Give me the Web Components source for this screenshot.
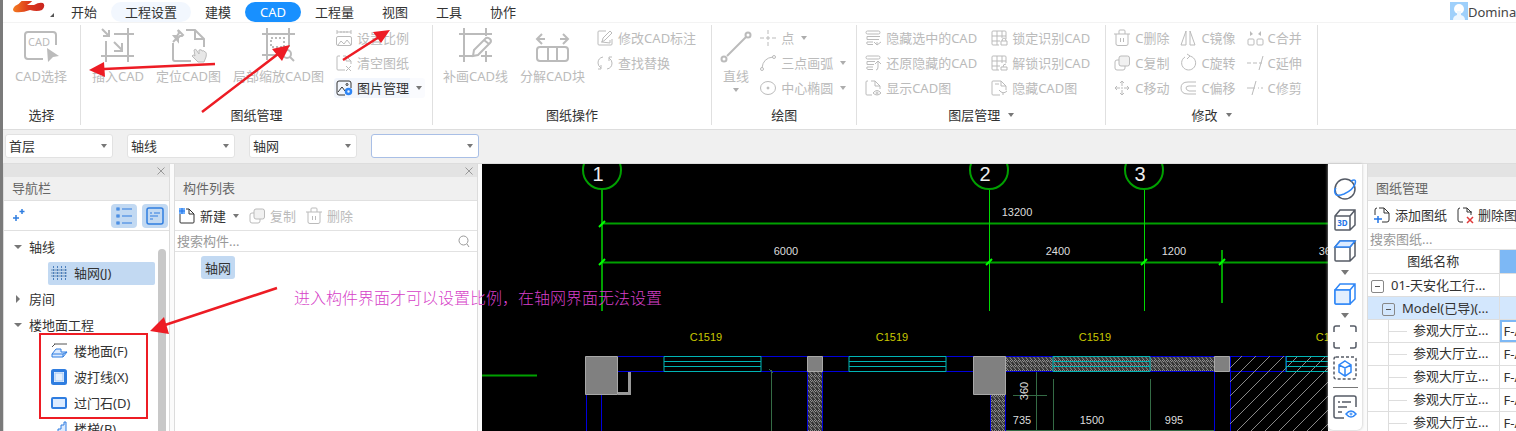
<!DOCTYPE html>
<html lang="zh-CN">
<head>
<meta charset="utf-8">
<title>CAD</title>
<style>
html,body{margin:0;height:100%}
body{font:13px/20px "Noto Sans","Noto Sans CJK SC",sans-serif;color:#333;background:#fff;overflow:hidden}
</style>
</head>
<body>
<cad-app></cad-app>
<script>
const RESET = `
*{box-sizing:border-box}
button,input,select{font:inherit;color:inherit;border:0;background:none;padding:0;margin:0;outline:0}
button{white-space:nowrap}
:host([hidden]){display:none}`;

const define = (name, html, setup) => customElements.define(name, class extends HTMLElement {
  connectedCallback() {
    if (this.shadowRoot) return;
    const t = document.createElement('template');
    t.innerHTML = typeof html === 'function' ? html(this) : html;
    this.attachShadow({mode: 'open'}).append(t.content.cloneNode(true));
    if (setup) setup(this);
  }
});

/* Icon drawings: [box size, markup]. Strokes use currentColor. */
const cube = `<path d="M2 8l5-6h15v15l-5 5H3q-1 0-1-1zM2 8h15v14M17 8l5-6"/>`;
const ICONS = {
  cadsel: [34, `<path d="M32 17V7q0-3-3-3H4Q1 4 1 7v21q0 3 3 3h15" stroke-width="2"/><text x="15" y="18" font-size="11" text-anchor="middle" fill="currentColor" stroke="none">CAD</text><path d="M23 20l12 8-6 1-5 5z" fill="currentColor" stroke="none"/>`],
  insert: [34, `<path d="M5 13v21M0 28h33M13 6h20M27 0v34M1 1l7 7M8 2v6H2M13 14l8 8M21 15v8h-8" stroke-width="2"/>`],
  locate: [34, `<path d="M1 15v16q0 2 2 2h16M14 2h9l9 9v8M23 2v9h9" stroke-width="2"/><path d="M6 2l5 5-1 1-2 0-2 2v3L2 8h3l2-3zM6 9l-5 5" stroke-width="2"/><path d="M22 22q2-2 3 1l2 3v-4q3-1 3 1 2-1 3 1 2 0 1 5l-2 5h-6l-6-6q1-2 3 0z" fill="currentColor" fill-opacity=".35"/>`],
  clipzoom: [34, `<path d="M5 0v32M27 0v19M0 6h33M0 27h19" stroke-width="2"/><path d="M9 10h13v9H9z" stroke-width="2" stroke-dasharray="2 2"/><circle cx="25" cy="26" r="4" stroke-width="2"/><path d="M28 29l4 4" stroke-width="2"/>`],
  patch: [34, `<path d="M5 0v34M0 6h33M27 0v8M0 28h13M22 28h11M27 23v11" stroke-width="2"/><path d="M14 28l1-6 12-12q2-1 4 1t0 4L19 27zM25 12l5 4" stroke-width="2"/>`],
  explode: [34, `<rect x="1" y="19" width="31" height="14" rx="3" stroke-width="2"/><path d="M12 19v14M21 19v14M1 11h8M6 6l-5 5 5 5M24 11h8M27 6l5 5-5 5" stroke-width="2"/>`],
  line: [34, `<path d="M8 28L27 9" stroke-width="2"/><circle cx="29" cy="7" r="2.5" stroke-width="2"/><circle cx="5" cy="31" r="2.5" stroke-width="2"/>`],
  scale: [16, `<path d="M1 0v4M15 0v4M1 2h14M5 1v2M8 1v2M11 1v2"/><rect x=".5" y="6.500" width="15" height="9" rx="1.500"/><path d="M2 15l3-4 3 3 3-4 4 5"/>`],
  clear: [16, `<path d="M9 15H2q-1 0-1-1V2q0-1 1-1h2M7 1h3l5 5v3M10 1v5h5M10 11l5 5M15 11l-5 5"/>`],
  picture: [16, `<path d="M15 8V3q0-2-2-2H3Q1 1 1 3v10q0 2 2 2h6M2 12l4-5 3 4"/><circle cx="11" cy="4.500" r="1"/><circle cx="12.500" cy="11.500" r="2.500" stroke="#2f86f6" stroke-width="2.500"/>`],
  edit: [16, `<path d="M9 1H2Q1 1 1 2v12q0 1 1 1h12q1 0 1-1V9M5 12l1-4 7-7 2 2-7 7zM4 12h1l8 1v-3"/>`],
  replace: [16, `<path d="M6 2Q1 3 1 8q0 3 3 5M4 10v4H1M10 14q5-1 5-6 0-3-3-5M12 6V2h3"/>`],
  point: [16, `<path d="M8 0v4M8 12v4M0 8h4M12 8h4M6 8h4M8 6v4"/>`],
  arc: [16, `<path d="M2 13Q3 3 13 2"/><circle cx="2" cy="14" r="1.500"/><circle cx="14" cy="2" r="1.500"/>`],
  ellipse: [16, `<ellipse cx="8" cy="8" rx="7.500" ry="6.500"/><circle cx="8" cy="8" r="1" fill="currentColor"/>`],
  layerhide: [16, `<rect x="1" y="1" width="14" height="3" rx="1.500"/><path d="M15 6.500H2v3h12M8 12H2q-1 2 1 2.500h5M9 12l3 3 4-3M12 12v3"/>`],
  layershow: [16, `<rect x="1" y="1" width="14" height="3" rx="1.500"/><path d="M10 6.500H2v3h7M8 12H2q-1 2 1 2.500h5M10 9l3-3 3 3M13 6v6q0 3-2 3"/>`],
  show: [16, `<path d="M7 15H2q-1 0-1-1V2q0-1 1-1h1M6 1h4l5 5v3M10 1v5h5M8 13q4-5 8 0-4 4-8 0z"/><circle cx="12" cy="13" r="1"/>`],
  hide: [16, `<path d="M9 15H2q-1 0-1-1V2q0-1 1-1h8l5 5v4M10 1v5h5M4 4h4M8 10q4 5 8 1M12 13v2"/>`],
  gridlock: [16, `<path d="M15 9V2q0-1-1-1H2Q1 1 1 2v12q0 1 1 1h6M1 6h14M1 11h8M6 1v14M11 1v7M10 11h6v4h-6zM11 11q0-3 2-3t2 3"/>`],
  gridopen: [16, `<path d="M15 8V2q0-1-1-1H2Q1 1 1 2v12q0 1 1 1h6M1 6h14M1 11h8M6 1v14M11 1v7M10 12h6v3h-6zM12 12q0-3 3-3"/>`],
  trash: [16, `<path d="M0 4h16M5 4V1q0-1 1-1h4q1 0 1 1v3M2 4v10q0 1.500 2 1.500h8q2 0 2-1.500V4M6.500 8v4M9.500 8v4"/>`],
  copy: [16, `<rect x="5" y="1" width="10.500" height="10" rx="2" fill="currentColor" fill-opacity=".2"/><path d="M5 5H3Q1 5 1 7v6q0 2 2 2h6q2 0 2-2v-2"/>`],
  move: [16, `<path d="M8 1v5M8 10v5M1 8h5M10 8h5M6 3l2-2 2 2M6 13l2 2 2-2M3 6L1 8l2 2M13 6l2 2-2 2M7 8h2"/>`],
  mirror: [16, `<path d="M6 1v14H1zM10 1v14h5z"/>`],
  rotate: [16, `<path d="M5 2A7 7 0 1 0 9 1M7-1l3 2-3 3"/>`],
  offset: [16, `<path d="M16 2H8Q1 2 1 8t7 6h8M16 6H9Q6 6 6 8t3 3h7"/>`],
  merge: [16, `<rect x="1" y="9" width="6" height="6" rx="1"/><rect x="10" y="9" width="6" height="6" rx="1"/><path d="M3 1v5l3-2zM14 1v5l-3-2z" fill="currentColor" stroke="none"/>`],
  extend: [16, `<path d="M0 8h4M6 8h4M16 1l-4 14M12 8h3"/>`],
  trim: [16, `<path d="M0 8h8M11 8h1M14 8h2M9 1L5 15"/>`],
  sparkle: [16, `<path d="M12 1v5M9.500 3.500h5M6 7v6M3 10h6" stroke-width="1.500"/>`],
  list: [20, `<path d="M3 2h2v2H3zM3 9h2v2H3zM3 16h2v2H3zM8 3h10M8 10h10M8 17h10" stroke-width="1.200"/>`],
  note: [20, `<rect x="2" y="2" width="16" height="16" rx="2" stroke-width="1.500"/><path d="M5 7h2M9 7h6M5 10h8M5 13h3" stroke-width="1.200"/>`],
  axis: [16, `<path d="M0 5h16M0 8h16M0 11h16" stroke="#6f90b5"/><path d="M2.500 1v14M6.500 1v14M10.500 1v14M14.500 1v14" stroke="#4b7fbd" stroke-dasharray="2 1"/>`],
  floor: [16, `<path d="M3 1h13M4 1L1 4" stroke="#555"/><path d="M5 6h5v3h6l-4 5H1v-3zM1 11h11v3M12 11l4-2" fill="#dcebff"/>`],
  wave: [16, `<rect x="1.500" y="1.500" width="13" height="13" rx="1" stroke-width="3" stroke="#2f7de0"/><rect x="4" y="4" width="8" height="8" fill="#e5f0fd" stroke="#9cc4f5"/>`],
  stone: [16, `<rect x="1" y="3" width="14" height="10" rx="1" fill="#dcebff" stroke-width="2"/>`],
  stair: [16, `<path d="M1 14h3v-3h3V8h3V4h3V1h2v14H1z" fill="#dcebff"/>`],
  fresh: [16, `<path d="M1 6v8q0 1 1 1h12q1 0 1-1V6l-5-5H7M10 1v5h5"/><path d="M0 0h6v6H0z" fill="#6fb0ff" stroke="none"/><path d="M0 3h6M3 0v6" stroke="#2575e6"/>`],
  search: [16, `<circle cx="7.500" cy="7.500" r="4.500"/><path d="M11 11l2 3"/>`],
  addpage: [16, `<path d="M1 8V3q0-2 2-2M5 1h5l5 5v7q0 2-2 2H8M10 1v5h5"/><path d="M4 9v7M0 12h8" stroke="#2575e6" stroke-width="1.500"/>`],
  delpage: [16, `<path d="M6 15H3q-2 0-2-2V3q0-2 2-2M6 1h4l4 4v3M10 1v4h5"/><path d="M10 10l6 6M16 10l-6 6" stroke="#e03a3a" stroke-width="1.500"/>`],
  orbit: [24, `<circle cx="12" cy="12" r="10" stroke-width="1.500"/><path d="M18 4Q24 1 22 7 20 13 11 17 3 20 2 16 1 13 3 11" stroke="#2f86f6" stroke-width="1.500"/>`],
  threed: [24, `<g stroke-width="1.500">${cube}</g><text x="9.500" y="18" font-size="8" font-weight="700" text-anchor="middle" stroke="none" fill="#2575e6">3D</text>`],
  cubetop: [24, `<g stroke-width="1.500">${cube}<path d="M2 8l5-6h15l-5 6z" fill="#dcebff" stroke="#2f86f6"/></g>`],
  cubeblue: [24, `<g stroke="#2f86f6" stroke-width="1.500">${cube}<path d="M2 8h15v14H3q-1 0-1-1z" fill="#e3effe"/></g>`],
  full: [24, `<path d="M1 7V3q0-2 2-2h4M17 1h4q2 0 2 2v4M23 17v4q0 2-2 2h-4M7 23H3q-2 0-2-2v-4" stroke-width="1.500"/>`],
  select3d: [24, `<rect x="1" y="1" width="22" height="22" rx="2" stroke-dasharray="3 2" stroke-width="1.500"/><path d="M12 5l6 4v7l-6 4-6-4V9zM6 9l6 3 6-3M12 12v8" stroke="#2f86f6" stroke-width="1.500"/>`],
  inspect: [24, `<path d="M23 12V3q0-2-2-2H3Q1 1 1 3v18q0 2 2 2h8M5 7h2M9 7h9M5 12h9M5 17h4" stroke-width="1.500"/><path d="M13 19q5-6 10 0-5 6-10 0z" stroke="#2f86f6" stroke-width="1.500"/><circle cx="18" cy="19" r="1" stroke="#2f86f6"/>`],
  close: [10, `<path d="M1.500 1.500l7 7M8.500 1.500l-7 7"/>`],
  user: [18, `<path d="M0 0h18v18H0z" fill="#9fd0fb" stroke="none"/><circle cx="9" cy="7" r="5" fill="#fff" stroke="none"/><path d="M3 18q0-4 4-5V9h4v4q4 1 4 5z" fill="#eef7ff" stroke="none"/>`],
  logo: [34, `<path d="M12 0Q10 7 3 10-1 14 3 16 10 17 18 14 25 16 30 14 34 10 31 7 27 6 22 9 18 9 15 9 21 6 23 0z" stroke="none" fill="url(#lg)"/><defs><linearGradient id="lg"><stop offset="0" stop-color="#f47b20"/><stop offset=".5" stop-color="#dc3a1d"/><stop offset="1" stop-color="#c92520"/></linearGradient></defs>`]
};

define('ui-icon', el => {
  const [s, body] = ICONS[el.getAttribute('name')];
  return `<style>:host{display:block;flex:none;width:${s}px;height:${s}px}svg{display:block;overflow:visible}</style>
  <svg width="${s}" height="${s}" viewBox="0 0 ${s} ${s}" fill="none" stroke="currentColor" aria-hidden="true">${body}</svg>`;
});

define('ui-caret', `<style>:host{display:block;flex:none;border:3px solid transparent;border-top:4px solid #777;border-bottom:0}</style>`);

define('tool-button', el => {
  const a = n => el.getAttribute(n), has = n => el.hasAttribute(n);
  return `<style>${RESET}
  :host{display:block;flex:none}
  button{display:flex;align-items:center;gap:5px;height:25px;color:#333}
  button:disabled{color:#bbb}
  :host([large]) button{flex-direction:column;gap:4px;height:auto;padding-top:3px}
  :host([large]) ui-caret{margin-top:-2px}
  :host(:not([large])) ui-caret{margin-left:2px}
  button:disabled ui-caret{opacity:.6}
  :host([lit]) button{background:linear-gradient(90deg,#f2f6fd 84%,#fafbfe 84%);height:20px;margin:3px 0 0 -2px;padding:0 3px 0 2px;border-radius:3px}
  </style><button ${has('off') ? 'disabled' : ''}><ui-icon name="${a('icon')}"></ui-icon><span>${a('label')}</span>${has('menu') ? '<ui-caret></ui-caret>' : ''}</button>`;
});

define('ribbon-group', el => `<style>${RESET}
  :host{display:flex;flex-direction:column;flex:none;height:100px;border-right:1px solid #e0e0e0}
  .body{display:flex;gap:var(--gap,12px);height:80px;padding:0 var(--end,15px) 0 var(--start,8px)}
  footer{display:flex;justify-content:center;align-items:center;gap:8px;height:20px;color:#333}
  ::slotted(.col){display:flex;flex-direction:column}
  </style><div class="body"><slot></slot></div><footer><span>${el.getAttribute('label')}</span>${el.hasAttribute('menu') ? '<ui-caret></ui-caret>' : ''}</footer>`);

define('combo-box', el => `<style>${RESET}
  :host{display:block;position:relative;width:108px;height:24px}
  select{appearance:none;width:100%;height:100%;padding:0 20px 0 3px;border:1px solid #e2e2e2;border-radius:3px;background:#fff;color:#333}
  :host([active]) select{border-color:#a9bfe6}
  ui-caret{position:absolute;right:6px;top:10px;pointer-events:none}
  </style><select aria-label="${el.getAttribute('label')}"><option>${el.getAttribute('value') || ''}</option></select><ui-caret></ui-caret>`);

define('dock-panel', el => `<style>${RESET}
  :host{display:flex;flex-direction:column;min-width:0;min-height:0;background:#fff;border:solid #dcdcdc;border-width:0 1px;overflow:hidden}
  .strip{display:flex;justify-content:flex-end;align-items:center;flex:none;height:13px;padding-right:3px;background:#e3e3e3;color:#999}
  h2{flex:none;margin:0;height:24px;padding:1px 8px 0;font-size:13px;font-weight:400;line-height:20px;background:#f0f0f0;color:#666;border-bottom:1px solid #e0e0e0}
  </style><div class="strip"><button aria-label="关闭"><ui-icon name="close"></ui-icon></button></div><h2>${el.getAttribute('label')}</h2><slot></slot>`);

define('search-row', el => `<style>${RESET}
  :host{display:flex;align-items:center;flex:none;height:22px;padding:0 5px 0 2px;border:solid #e2e2e2;border-width:1px 0;color:#999}
  input{flex:1;min-width:0;height:20px;color:#333}
  input::placeholder{color:#999;opacity:1}
  </style><input type="search" placeholder="${el.getAttribute('label')}" aria-label="${el.getAttribute('label')}"><ui-icon name="search"></ui-icon>`);

define('nav-tree', `<style>${RESET}
  :host{display:flex;flex:1;min-height:0;overflow:hidden;padding-top:3px}
  ul{list-style:none;margin:0;padding:0;flex:1}
  li{height:26px;display:flex;align-items:center}
  button{display:flex;align-items:center;gap:7px;height:24px}
  .p button{padding-left:10px}
  .arrow{width:8px;height:8px;background:#777;clip-path:polygon(0 2px,8px 2px,4px 6px)}
  .arrow.shut{clip-path:polygon(2px 0,6px 4px,2px 8px)}
  .c button{margin-left:44px;padding-left:3px;width:107px;height:23px;color:#333;border-radius:2px}
  .c ui-icon{color:#2f7de0}
  .on button{background:#c2d9f2}
  .bar{width:8px;margin:15px 3px 0 0;background:#c8c8c8;border-radius:4px 4px 0 0}
  </style>
  <ul>
  <li class="p"><button><i class="arrow"></i>轴线</button></li>
  <li class="c on"><button><ui-icon name="axis"></ui-icon>轴网(J)</button></li>
  <li class="p"><button><i class="arrow shut"></i>房间</button></li>
  <li class="p"><button><i class="arrow"></i>楼地面工程</button></li>
  <li class="c"><button><ui-icon name="floor"></ui-icon>楼地面(F)</button></li>
  <li class="c"><button><ui-icon name="wave"></ui-icon>波打线(X)</button></li>
  <li class="c"><button><ui-icon name="stone"></ui-icon>过门石(D)</button></li>
  <li class="c"><button><ui-icon name="stair"></ui-icon>楼梯(B)</button></li>
  </ul><div class="bar"></div>`);

define('cad-view', () => {
  const tick = (x, y) => `<path d="M${x - 3} ${y + 3}l6-6" stroke="#00ff00" stroke-width="2"/>`;
  const win = (x, w) => `<path d="M${x} 356.500h${w}v15h-${w}zM${x} 361.500h${w}M${x} 366.500h${w}" stroke="#00b4b4"/>`;
  const diag = Array.from({length: 12}, (_, k) => `M${1242 + 14 * k} 356l-90 90`).join('');
  return `<style>:host{display:block;flex:1;min-width:0;background:#000;overflow:hidden}svg{display:block;width:100%;height:100%}
  text{font:11px "Liberation Sans",sans-serif;fill:#ddd;stroke:none;text-anchor:middle}
  .n{font-size:20px;fill:#eee}.y{fill:#c8c800}</style>
  <svg fill="none" role="img" aria-label="CAD">
  <defs><pattern id="h" width="4" height="5" patternUnits="userSpaceOnUse"><rect width="4" height="5" fill="#353535"/><path d="M0 0l4 5M2 0l2 2" stroke="#aaa" stroke-width=".8"/></pattern>
  <clipPath id="c"><path d="M1230 356h400v400h-400z"/></clipPath></defs>
  <g transform="translate(-482 -164)">
  <g stroke="#00a000" stroke-width="2"><circle cx="602" cy="170" r="19"/><circle cx="989" cy="170" r="19"/><circle cx="1144" cy="170" r="19"/>
  <path d="M602 190v121M1222 250v53M602 223.500h1200M602 262.500h1200M482 375.500h55"/></g>
  <path d="M989.500 190v121M1144.500 190v121" stroke="#00d800"/>
  ${tick(602, 224)}${tick(602, 262)}${tick(989, 262)}${tick(1144, 262)}${tick(1222, 262)}
  <path d="M808 372h14v80h-14zM991 395h14v80h-14zM1006 357h208v14h-208z" fill="url(#h)"/>
  <path d="M618 356.500h668M618 371.500h668M586.500 395v80M601.500 395v80M807.500 372v80M822.500 372v80M990.500 395v80M1005.500 395v80M1214.500 372v80M1230.500 356v100M1286.500 356v16" stroke="#0000dc"/>
  <path clip-path="url(#c)" d="${diag}" stroke="#888"/>
  ${win(664, 97)}${win(849, 97)}${win(1053, 97)}${win(1286, 97)}
  <path d="M585.500 356.500h32v38h-32zM973.500 356.500h32v38h-32zM807.500 356.500h15v15h-15zM1214.500 356.500h15v15h-15z" fill="#808080" stroke="#a8a8a8"/>
  <path d="M618 393.500h11.500V372" stroke="#999" stroke-width="3"/>
  <path d="M771.500 370v80M769 369l4 4M1036.500 372v80M1013 395.500h34M1053.500 379v80M1150.500 379v80M1006 430.500h208" stroke="#346b45"/>
  <text class="n" x="598" y="181">1</text><text class="n" x="985" y="181">2</text><text class="n" x="1140" y="181">3</text>
  <text x="1017" y="216">13200</text><text x="786" y="255">6000</text><text x="1058" y="255">2400</text><text x="1174" y="255">1200</text><text x="1331" y="255">3600</text>
  <text class="y" x="706" y="341">C1519</text><text class="y" x="892" y="341">C1519</text><text class="y" x="1095" y="341">C1519</text><text class="y" x="1332" y="341">C1519</text>
  <text x="1022" y="424">735</text><text x="1092" y="424">1500</text><text x="1174" y="424">995</text><text transform="translate(1028 391) rotate(-90)">360</text>
  </g></svg>`;
});

define('view-tools', () => {
  const b = (i, l) => `<button aria-label="${l}"><ui-icon name="${i}"></ui-icon></button>`;
  return `<style>${RESET}
  :host{display:flex;flex-direction:column;align-items:center;gap:7px;flex:none;width:34px;margin-bottom:1px;padding-top:13px;background:#fff;color:#555b66;border-radius:0 0 5px 5px;box-shadow:0 0 3px #bbb}
  button{display:block;height:24px}
  ui-caret{border-width:5px 4px 0}
  hr{width:25px;height:1px;margin:0;border:0;background:#777}
  </style>${b('orbit', '旋转')}${b('threed', '三维')}${b('cubetop', '俯视')}<ui-caret></ui-caret>${b('cubeblue', '实体')}<ui-caret></ui-caret>${b('full', '全屏')}${b('select3d', '选择')}<hr>${b('inspect', '显示')}`;
});

define('sheet-table', () => {
  const row = `<tr><td class="k"><i></i>参观大厅立...</td><td>F-A</td></tr>`;
  return `<style>${RESET}
  :host{display:block;overflow:hidden}
  table{border-collapse:collapse;table-layout:fixed;width:230px;color:#333}
  th,td{height:23px;padding:0;font-weight:400;line-height:20px;text-align:left;white-space:nowrap;border:solid #dedede;border-width:0 1px 1px 0;overflow:hidden}
  col:first-child{width:131px}
  th{text-align:center}
  th+th{background:#7db8f5}
  td+td{padding-left:4px}
  .sel td{background:#d3e7fd}
  td button{display:inline-block;width:13px;height:13px;margin:0 7px 0 3px;border:1px solid #888;border-radius:2px;background:linear-gradient(#555,#555) 3px 5px/5px 1px no-repeat;vertical-align:-2px}
  .sel button{margin-left:14px}
  .k i{display:inline-block;width:19px;height:23px;margin:-2px 6px -2px 20px;border-left:1px solid #ddd;background:linear-gradient(#ddd,#ddd) 0 11px/18px 1px no-repeat;vertical-align:middle}
  .first td+td{box-shadow:inset 0 0 0 2px #7db8f5}
  </style><table><colgroup><col><col></colgroup>
  <thead><tr><th>图纸名称</th><th></th></tr></thead>
  <tbody><tr><td><button aria-label="折叠"></button>01-天安化工行...</td><td></td></tr>
  <tr class="sel"><td><button aria-label="折叠"></button>Model(已导)(...</td><td></td></tr>
  ${row.replace('<tr>', '<tr class="first">')}${row.repeat(4)}</tbody></table>`;
});

/* Red arrows, frame and note laid over the window. */
define('markup-layer', `<style>
  :host{position:absolute;inset:0 0 0 -3px;pointer-events:none;overflow:hidden}
  svg{position:absolute;inset:0;width:100%;height:100%}
  p{position:absolute;left:294px;top:285px;margin:0;font:16px/24px "Noto Sans CJK SC",sans-serif;font-weight:300;color:#d63fc8;white-space:nowrap}
  </style><svg fill="none" stroke="#ed1c24" stroke-width="2">
  <path d="M215 64L104 69M202 112l76-58M343 60l36-23M277 288l-112 37" stroke-width="2.500"/>
  <path d="M89 70l15-8 1 15zM290 45l-18 4 10 12zM390 30l-17 2 8 11zM150 331l14-14 5 17z" fill="#ed1c24" stroke="none"/>
  <rect x="40" y="334" width="107" height="84"/></svg>
  <p>进入构件界面才可以设置比例，在轴网界面无法设置</p>`);

define('cad-app', () => {
  const t = (i, l, x = 'off') => `<tool-button icon="${i}" label="${l}" ${x}></tool-button>`;
  const col = (...r) => `<div class="col">${r.join('')}</div>`;
  return `<style>${RESET}
  :host{display:flex;flex-direction:column;position:relative;height:100vh;border-left:3px solid #7a7a7a;overflow:clip}
  .tabs{display:flex;align-items:center;flex:none;height:23px;border-bottom:1px solid #f3f3f3;padding-top:1px}
  .logo{display:flex;width:54px;height:22px;padding-left:9px;overflow:hidden;color:#555}
  .logo i{align-self:flex-end;margin:0 0 6px;border:solid transparent;border-width:4px 0 0 4px;border-bottom:0;border-right:4px solid #555}
  .logo ui-icon{margin-top:-5px}
  .tabs button{height:20px;padding:0 14px;border-radius:10px}
  .tabs .hover{background:#f2f7fe}
  .tabs .on{padding:0 15px;background:#1890ff;color:#fff}
  .user{display:flex;width:66px;margin-left:auto;color:#444}
  .ribbon{display:flex;flex:none;height:107px;padding-top:2px;border-bottom:1px solid #ddd}
  .pick{--start:12px;--end:13px}
  .sheet{--start:11px;--end:7px}
  .work{--start:10px}
  .draw{--start:7px;--end:10px;--gap:7px}
  .layer{--gap:14px}
  .modify{--gap:11px}
  .combos{display:flex;gap:14px;flex:none;height:34px;padding:4px 2px;background:#f0f0f0;border-bottom:1px solid #ddd}
  .main{display:flex;flex:1;min-height:0;background:#fbfbfb}
  .nav{width:167px}
  .list{width:304px;margin:0 4px}
  .sheets{flex:none;width:240px;margin:0 -91px 0 5px}
  .bar{display:flex;align-items:center;gap:10px;flex:none;height:29px;padding:0 4px}
  .nav .bar{gap:5px;height:30px;padding:0 1px 0 6px;color:#2f7de0;border-bottom:1px solid #e0e0e0}
  .bar .tog{display:grid;place-items:center;width:26px;height:24px;background:#c2d9f2;border-radius:4px}
  .bar .tog:first-of-type{margin-left:auto}
  .sheets .bar{height:27px;padding-left:6px}
  .chip{align-self:flex-start;margin:4px 0 0 26px;padding:0 4px;height:23px;background:#c2d9f2;border-radius:3px}
  </style>
  <nav class="tabs"><div class="logo"><ui-icon name="logo"></ui-icon><i></i></div>
  <button>开始</button><button class="hover">工程设置</button><button>建模</button><button class="on">CAD</button><button>工程量</button><button>视图</button><button>工具</button><button>协作</button>
  <div class="user"><ui-icon name="user"></ui-icon><span>Domina</span></div></nav>
  <div class="ribbon">
  <ribbon-group class="pick" label="选择">${t('cadsel', 'CAD选择', 'large off')}</ribbon-group>
  <ribbon-group class="sheet" label="图纸管理">${t('insert', '插入CAD', 'large off')}${t('locate', '定位CAD图', 'large off')}${t('clipzoom', '局部缩放CAD图', 'large off')}${col(t('scale', '设置比例'), t('clear', '清空图纸'), t('picture', '图片管理', 'menu lit'))}</ribbon-group>
  <ribbon-group class="work" label="图纸操作">${t('patch', '补画CAD线', 'large off')}${t('explode', '分解CAD块', 'large off')}${col(t('edit', '修改CAD标注'), t('replace', '查找替换'))}</ribbon-group>
  <ribbon-group class="draw" label="绘图">${t('line', '直线', 'large off menu')}${col(t('point', '点', 'off menu'), t('arc', '三点画弧', 'off menu'), t('ellipse', '中心椭圆', 'off menu'))}</ribbon-group>
  <ribbon-group class="layer" label="图层管理" menu>${col(t('layerhide', '隐藏选中的CAD'), t('layershow', '还原隐藏的CAD'), t('show', '显示CAD图'))}${col(t('gridlock', '锁定识别CAD'), t('gridopen', '解锁识别CAD'), t('hide', '隐藏CAD图'))}</ribbon-group>
  <ribbon-group class="modify" label="修改" menu>${col(t('trash', 'C删除'), t('copy', 'C复制'), t('move', 'C移动'))}${col(t('mirror', 'C镜像'), t('rotate', 'C旋转'), t('offset', 'C偏移'))}${col(t('merge', 'C合并'), t('extend', 'C延伸'), t('trim', 'C修剪'))}</ribbon-group>
  </div>
  <div class="combos"><combo-box label="楼层" value="首层"></combo-box><combo-box label="类别" value="轴线"></combo-box><combo-box label="构件类型" value="轴网"></combo-box><combo-box label="构件" active></combo-box></div>
  <div class="main">
  <dock-panel class="nav" label="导航栏"><div class="bar"><ui-icon name="sparkle"></ui-icon><button class="tog" aria-label="列表"><ui-icon name="list"></ui-icon></button><button class="tog" aria-label="详情"><ui-icon name="note"></ui-icon></button></div><nav-tree></nav-tree></dock-panel>
  <dock-panel class="list" label="构件列表"><div class="bar">${t('fresh', '新建', 'menu')}${t('copy', '复制')}${t('trash', '删除')}</div><search-row label="搜索构件..."></search-row><button class="chip">轴网</button></dock-panel>
  <cad-view></cad-view>
  <view-tools></view-tools>
  <dock-panel class="sheets" label="图纸管理"><div class="bar">${t('addpage', '添加图纸', '')}${t('delpage', '删除图纸', '')}</div><search-row label="搜索图纸..."></search-row><sheet-table></sheet-table></dock-panel>
  </div>
  <markup-layer></markup-layer>`;
});
</script>
</body>
</html>
